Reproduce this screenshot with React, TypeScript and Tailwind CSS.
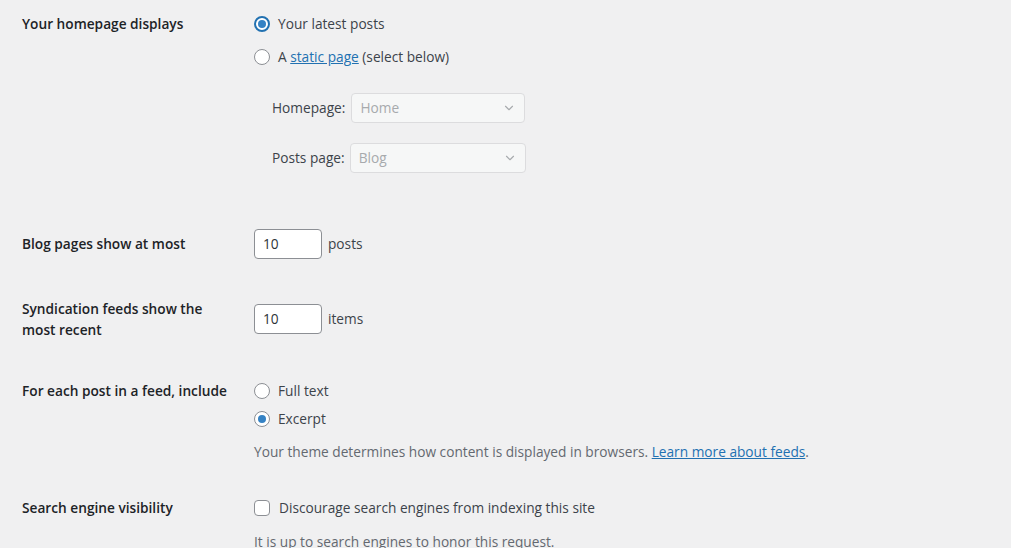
import React from "react";

const Radio = ({ checked = false, focused = false }: { checked?: boolean; focused?: boolean }) => (
  <span
    className={`flex h-4 w-4 shrink-0 items-center justify-center rounded-full bg-white ${
      focused ? "border-2 border-[#2271b1]" : "border border-[#8c8f94]"
    }`}
  >
    {checked && <span className="h-2 w-2 rounded-full bg-[#3582c4]" />}
  </span>
);

const Chevron = () => (
  <svg width="14" height="14" viewBox="0 0 20 20" className="shrink-0">
    <path d="M5 7.5 L10 12.5 L15 7.5" fill="none" stroke="#a7aaad" strokeWidth="1.6" strokeLinecap="round" strokeLinejoin="round" />
  </svg>
);

const Select = ({ value, w }: { value: string; w: string }) => (
  <div
    className={`flex h-[30px] ${w} items-center justify-between rounded-[4px] border border-[#dcdcde] bg-[#f6f7f7] pl-[8px] pr-[8px] text-[#a7aaad]`}
  >
    <span>{value}</span>
    <Chevron />
  </div>
);

const NumberInput = () => (
  <div className="flex h-[30px] w-[68px] items-center rounded-[4px] border border-[#8c8f94] bg-white pl-[8px] text-[#2c3338]">
    10
  </div>
);

export default function App() {
  return (
    <div
      className="h-[548px] w-full overflow-hidden bg-[#f0f0f1] text-[13.7px] leading-[20px] text-[#3c434a]"
      style={{ fontFamily: '"Open Sans", "Noto Sans", sans-serif' }}
    >
      {/* Row 1 */}
      <div className="flex pt-[14px]">
        <div className="w-[254px] shrink-0 pl-[22px] font-semibold text-[#1d2327]">Your homepage displays</div>
        <div className="flex flex-col">
          <label className="flex h-[20px] items-center gap-[8px]">
            <Radio checked focused />
            <span>Your latest posts</span>
          </label>
          <label className="mt-[13px] flex h-[20px] items-center gap-[8px]">
            <Radio />
            <span>
              A <a className="text-[#2271b1] underline">static page</a> (select below)
            </span>
          </label>
          <div className="mt-[26px] flex items-center gap-[6px] pl-[18px]">
            <span>Homepage:</span>
            <Select value="Home" w="w-[174px]" />
          </div>
          <div className="mt-[20px] flex items-center gap-[5px] pl-[18px]">
            <span>Posts page:</span>
            <Select value="Blog" w="w-[176px]" />
          </div>
        </div>
      </div>

      {/* Row 2 */}
      <div className="mt-[56px] flex items-center">
        <div className="w-[254px] shrink-0 pl-[22px] font-semibold text-[#1d2327]">Blog pages show at most</div>
        <div className="flex items-center gap-[6px]">
          <NumberInput />
          <span>posts</span>
        </div>
      </div>

      {/* Row 3 */}
      <div className="mt-[39px] flex items-center">
        <div className="w-[254px] shrink-0 pl-[22px] font-semibold leading-[21px] text-[#1d2327]">
          <div className="w-[200px]">Syndication feeds show the most recent</div>
        </div>
        <div className="flex items-center gap-[6px]">
          <NumberInput />
          <span>items</span>
        </div>
      </div>

      {/* Row 4 */}
      <div className="mt-[41px] flex">
        <div className="w-[254px] shrink-0 pl-[22px] font-semibold text-[#1d2327]">For each post in a feed, include</div>
        <div className="flex flex-col">
          <label className="flex h-[20px] items-center gap-[8px]">
            <Radio />
            <span>Full text</span>
          </label>
          <label className="mt-[8px] flex h-[20px] items-center gap-[8px]">
            <Radio checked />
            <span>Excerpt</span>
          </label>
          <p className="mt-[13px] text-[#646970]">
            Your theme determines how content is displayed in browsers.{" "}
            <a className="text-[#2271b1] underline">Learn more about feeds</a>.
          </p>
        </div>
      </div>

      {/* Row 5 */}
      <div className="mt-[36px] flex">
        <div className="w-[254px] shrink-0 pl-[22px] font-semibold text-[#1d2327]">Search engine visibility</div>
        <div className="flex flex-col">
          <label className="flex h-[20px] items-center gap-[9px]">
            <span className="h-4 w-4 shrink-0 rounded-[4px] border border-[#8c8f94] bg-white" />
            <span>Discourage search engines from indexing this site</span>
          </label>
          <p className="mt-[14px] text-[#646970]">It is up to search engines to honor this request.</p>
        </div>
      </div>
    </div>
  );
}
